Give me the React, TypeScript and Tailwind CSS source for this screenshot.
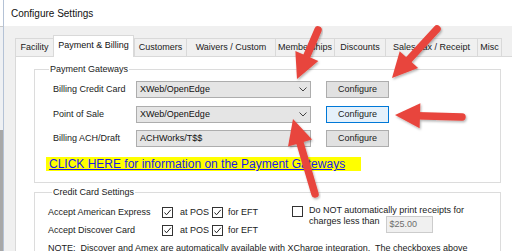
import React from 'react'

const TABS = [
  { label: 'Facility', w: 'w-[38px]' },
  { label: 'Payment & Billing', w: 'w-[81px]', active: true },
  { label: 'Customers', w: 'w-[52px]' },
  { label: 'Waivers / Custom', w: 'w-[89px]' },
  { label: 'Memberships', w: 'w-[59px]' },
  { label: 'Discounts', w: 'w-[51px]' },
  { label: 'Sales Tax / Receipt', w: 'w-[92px]' },
  { label: 'Misc', w: 'w-[25px]', last: true },
]

const GATEWAYS = [
  { label: 'Billing Credit Card', value: 'XWeb/OpenEdge' },
  { label: 'Point of Sale', value: 'XWeb/OpenEdge', focused: true },
  { label: 'Billing ACH/Draft', value: 'ACHWorks/T$$', noChevron: true },
]

// red callout arrows drawn over the screenshot
const ARROWS: { from: [number, number]; to: [number, number] }[] = [
  { from: [318, 30], to: [297, 79] },
  { from: [437, 29], to: [392, 78] },
  { from: [462, 117], to: [395, 115] },
  { from: [315, 194], to: [293, 119] },
]

function Chevron() {
  return (
    <svg width="8" height="5" viewBox="0 0 8 5" className="shrink-0">
      <polyline points="0.5,0.5 4,4 7.5,0.5" fill="none" stroke="#444" strokeWidth="1" />
    </svg>
  )
}

function Checkbox({ checked }: { checked?: boolean }) {
  return (
    <div className="w-[11px] h-[11px] border border-[#333] bg-white flex items-center justify-center shrink-0">
      {checked && (
        <svg width="9" height="9" viewBox="0 0 9 9">
          <polyline points="1.5,4.5 3.5,6.8 7.8,1.8" fill="none" stroke="#222" strokeWidth="1" />
        </svg>
      )}
    </div>
  )
}

function Arrow({ from, to }: { from: [number, number]; to: [number, number] }) {
  const [x1, y1] = from
  const [x2, y2] = to
  const len = Math.hypot(x2 - x1, y2 - y1)
  const ux = (x2 - x1) / len
  const uy = (y2 - y1) / len
  const nx = -uy
  const ny = ux
  const headLen = 25
  const half = 12.5
  const bx = x2 - ux * headLen
  const by = y2 - uy * headLen
  const head = `${x2},${y2} ${bx + nx * half},${by + ny * half} ${bx - nx * half},${by - ny * half}`
  return (
    <g filter="url(#shadow)">
      <line
        x1={x1}
        y1={y1}
        x2={bx + ux * 3}
        y2={by + uy * 3}
        stroke="#e8453c"
        strokeWidth="7.5"
        strokeLinecap="round"
      />
      <polygon points={head} fill="#e8453c" />
    </g>
  )
}

export default function App() {
  return (
    <div className="relative w-[512px] h-[251px] overflow-hidden bg-white font-['Liberation_Sans',Arial,sans-serif] text-[9px] leading-[11px] text-[#1a1a1a]">
      <div className="flex h-full">
        {/* sliver of the window behind */}
        <div className="w-[4px] shrink-0 flex flex-col border-r border-[#b4c2d6]">
          <div className="h-[26px] bg-white" />
          <div className="h-[104px] bg-[#eef0f3] border-t border-[#c8c8c8]" />
          <div className="flex-1 bg-[#a8a8a8]" />
        </div>

        <div className="flex-1 min-w-0">
          {/* Title bar */}
          <div className="h-[26px] flex items-center pl-[7px] pt-[1px] text-[10px] text-[#111] bg-white">
            Configure Settings
          </div>

          <div className="h-[225px] bg-[#f0f0f0] pl-[11px] pt-[9px]">
            {/* Tabs */}
            <div className="flex items-end h-[21px]">
              {TABS.map(t =>
                t.active ? (
                  <div
                    key={t.label}
                    className={`${t.w} shrink-0 h-[22px] -mb-[1px] relative z-10 bg-white border border-b-0 border-[#d9d9d9] flex items-center justify-center pb-[2px] text-[#111] whitespace-nowrap`}
                  >
                    {t.label}
                  </div>
                ) : (
                  <div
                    key={t.label}
                    className={`${t.w} shrink-0 h-[18px] border-t border-l ${t.last ? 'border-r' : ''} border-[#d9d9d9] flex items-center justify-center whitespace-nowrap`}
                  >
                    {t.label}
                  </div>
                )
              )}
            </div>

            {/* Tab panel */}
            <div className="h-[200px] bg-white border border-r-0 border-[#d9d9d9] pl-[18px] pt-[7px]">
              {/* Payment Gateways */}
              <fieldset className="w-[467px] h-[119px] border border-[#dcdcdc] pl-[9px] pr-[10px]">
                <legend className="ml-[5px] px-[1px] text-[#1a1a1a]">Payment Gateways</legend>
                <div className="flex flex-col gap-[7.5px] mt-[6px] pl-[9px]">
                  {GATEWAYS.map(g => (
                    <div key={g.label} className="flex items-center h-[17px]">
                      <div className="w-[83px]">{g.label}</div>
                      <div className="w-[175px] h-[17px] bg-[#e5e5e5] border border-[#adadad] flex items-center justify-between pl-[3px] pr-[3px] text-[#111]">
                        <span>{g.value}</span>
                        {!g.noChevron && <Chevron />}
                      </div>
                      <button
                        className={`ml-[15px] w-[63px] h-[17px] border text-[9px] leading-[11px] ${
                          g.focused ? 'bg-[#e5f1fb] border-[#0078d7]' : 'bg-[#e1e1e1] border-[#adadad]'
                        }`}
                      >
                        Configure
                      </button>
                    </div>
                  ))}
                </div>
                <div className="mt-[10px] ml-[2px] inline-block bg-[#ffff00] h-[14px] pl-[3px] pr-[16px] text-[12px] leading-[14px] text-[#1a1ae6] underline">
                  CLICK HERE for information on the Payment Gateways
                </div>
              </fieldset>

              {/* Credit Card Settings */}
              <fieldset className="mt-[4px] w-[467px] h-[80px] border border-[#dcdcdc] pl-[13px]">
                <legend className="ml-[4px] px-[1px]">Credit Card Settings</legend>
                <div className="flex mt-[5px]">
                  <div className="w-[244px] flex flex-col">
                    {[
                      { label: 'Accept American Express' },
                      { label: 'Accept Discover Card' },
                    ].map(r => (
                      <div key={r.label} className="flex items-center h-[18px]">
                        <div className="w-[114px]">{r.label}</div>
                        <Checkbox checked />
                        <span className="ml-[7px] w-[32px]">at POS</span>
                        <Checkbox checked />
                        <span className="ml-[5px]">for EFT</span>
                      </div>
                    ))}
                  </div>
                  <div className="flex items-start gap-[6px] pt-[3px]">
                    <Checkbox />
                    <div className="-mt-[1px]">
                      <div>Do NOT automatically print receipts for</div>
                      <div className="flex items-start gap-[6px]">
                        <span>charges less than</span>
                        <div className="w-[47px] h-[17px] bg-[#f0f0f0] border border-[#cccccc] pl-[3px] flex items-center text-[#6d6d6d]">
                          $25.00
                        </div>
                      </div>
                    </div>
                  </div>
                </div>
                <div className="whitespace-nowrap h-[18px] flex items-center">
                  NOTE:&nbsp; Discover and Amex are automatically available with XCharge integration.&nbsp; The checkboxes above
                </div>
              </fieldset>
            </div>
          </div>
        </div>
      </div>

      <svg className="absolute inset-0 pointer-events-none" width="512" height="251" viewBox="0 0 512 251">
        <defs>
          <filter id="shadow" x="-20%" y="-20%" width="140%" height="140%">
            <feDropShadow dx="1" dy="1.5" stdDeviation="1" floodColor="#000" floodOpacity="0.3" />
          </filter>
        </defs>
        {ARROWS.map((a, i) => (
          <Arrow key={i} from={a.from} to={a.to} />
        ))}
      </svg>
    </div>
  )
}
